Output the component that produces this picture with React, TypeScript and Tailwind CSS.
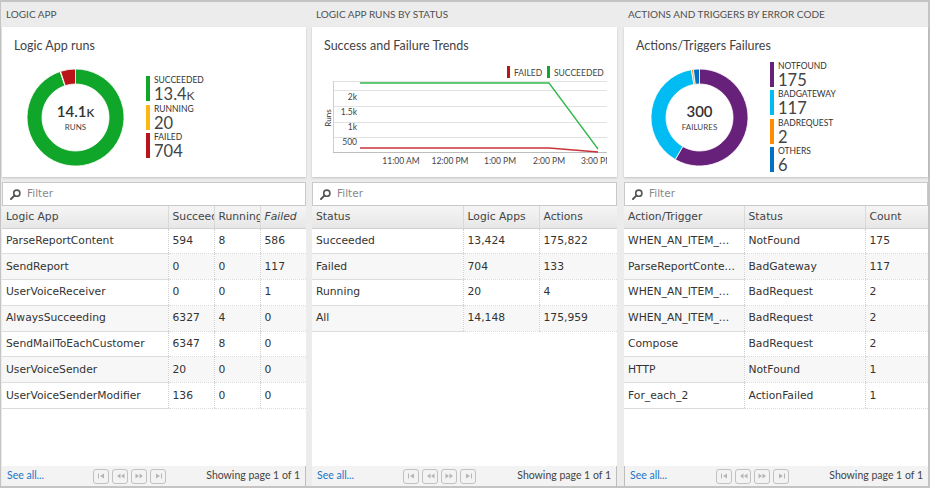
import React from "react";

const seg = "font-['Segoe_UI',Lato,sans-serif]";
const grid = "font-['DejaVu_Sans',Verdana,sans-serif]";

type Slice = { color: string; from: number; to: number };

const pt = (c: number, r: number, a: number) => {
  const rad = (a * Math.PI) / 180;
  return `${(c + r * Math.sin(rad)).toFixed(2)} ${(c - r * Math.cos(rad)).toFixed(2)}`;
};

const arc = (from: number, to: number) => {
  const c = 48.5;
  const R = 48.5;
  const r = 33.5;
  const large = to - from > 180 ? 1 : 0;
  return `M ${pt(c, R, from)} A ${R} ${R} 0 ${large} 1 ${pt(c, R, to)} L ${pt(c, r, to)} A ${r} ${r} 0 ${large} 0 ${pt(c, r, from)} Z`;
};

const Donut = ({ slices, value, small, label }: { slices: Slice[]; value: string; small?: string; label: string }) => (
  <svg width="97" height="97" viewBox="0 0 97 97" className="shrink-0">
    {slices.map((s, i) => (
      <path key={i} d={arc(s.from, s.to)} fill={s.color} stroke="#fff" strokeWidth="0.8" />
    ))}
    <text x="48.5" y="48" textAnchor="middle" fontSize="15" fontWeight="600" fill="#333" fontFamily="Lato, sans-serif">
      {value}
      {small && <tspan fontSize="11.5">{small}</tspan>}
    </text>
    <text x="48.5" y="61" textAnchor="middle" fontSize="8" fill="#444" fontFamily="Lato, sans-serif">
      {label}
    </text>
  </svg>
);

type LegendItem = { color: string; label: string; value: string; k?: boolean };

const Legend = ({ items }: { items: LegendItem[] }) => (
  <div className="flex flex-col gap-[3.5px]">
    {items.map((it) => (
      <div key={it.label} className="flex h-[25px]">
        <div className="w-[4px]" style={{ backgroundColor: it.color }} />
        <div className={`ml-[4px] flex flex-col text-[#333] ${seg}`}>
          <span className="text-[8.5px] leading-[8px]">{it.label}</span>
          <span className="mt-[2px] text-[16.5px] leading-[16px] text-[#444]">
            {it.value}
            {it.k && <span className="text-[12px]">K</span>}
          </span>
        </div>
      </div>
    ))}
  </div>
);

const Card = ({ title, children }: { title: string; children: React.ReactNode }) => (
  <div className="h-[150px] bg-white shadow-[0_1px_2px_rgba(0,0,0,0.18)] overflow-hidden">
    <div className={`pt-[11px] pl-[12px] text-[12.5px] leading-[16px] text-[#444] ${seg}`}>{title}</div>
    {children}
  </div>
);

const TrendChart = () => {
  const gl = [31, 47, 63, 78];
  const xl = [
    [89, "11:00 AM"],
    [138, "12:00 PM"],
    [188, "1:00 PM"],
    [237, "2:00 PM"],
    [285, "3:00 PM"],
  ] as const;
  return (
    <svg width="295" height="110" viewBox="0 0 295 110" className="mt-[5px]" fontFamily="Lato, sans-serif">
      <rect x="195" y="7" width="3" height="12" fill="#ba141a" />
      <text x="202" y="16.5" fontSize="8.5" fill="#444">FAILED</text>
      <rect x="235" y="7" width="3" height="12" fill="#10a62a" />
      <text x="242" y="16.5" fontSize="8.5" fill="#444">SUCCEEDED</text>
      <line x1="21" y1="22.5" x2="295" y2="22.5" stroke="#e2e2e2" />
      {gl.map((y) => (
        <line key={y} x1="21" y1={y + 0.5} x2="295" y2={y + 0.5} stroke="#e2e2e2" />
      ))}
      <line x1="21.5" y1="22" x2="21.5" y2="93" stroke="#cfcfcf" />
      <line x1="21" y1="93.5" x2="295" y2="93.5" stroke="#bdbdbd" />
      <text x="45" y="41" fontSize="8.5" fill="#444" textAnchor="end">2k</text>
      <text x="45" y="56" fontSize="8.5" fill="#444" textAnchor="end">1.5k</text>
      <text x="45" y="71" fontSize="8.5" fill="#444" textAnchor="end">1k</text>
      <text x="45" y="86" fontSize="8.5" fill="#444" textAnchor="end">500</text>
      <text x="0" y="0" fontSize="8" fill="#333" textAnchor="middle" transform="translate(19 59) rotate(-90)">
        Runs
      </text>
      <polyline points="48,24 237,24 286,90" fill="none" stroke="#2fb84a" strokeWidth="1.3" />
      <polyline points="48,89 237,89 286,93" fill="none" stroke="#c8333a" strokeWidth="1.3" />
      {xl.map(([x, t]) => (
        <text key={t} x={x} y="105" fontSize="8.5" fill="#444" textAnchor="middle">
          {t}
        </text>
      ))}
    </svg>
  );
};

const Filter = () => (
  <div className="mt-[5px] h-[24px] shrink-0 bg-white border border-[#c9c9c9] flex items-center pl-[7px]">
    <svg width="11" height="11" viewBox="0 0 11 11">
      <circle cx="6.8" cy="4.2" r="3.1" fill="none" stroke="#555" strokeWidth="1.6" />
      <line x1="4.6" y1="6.4" x2="1" y2="10" stroke="#555" strokeWidth="2" strokeLinecap="round" />
    </svg>
    <span className={`ml-[6px] text-[10.5px] text-[#888] ${grid}`}>Filter</span>
  </div>
);

type Col = { name: string; w: number; italic?: boolean };

const Table = ({ cols, rows }: { cols: Col[]; rows: string[][] }) => (
  <table className={`w-full table-fixed border-collapse text-[10.75px] text-[#333] ${grid}`}>
    <colgroup>
      {cols.map((c) => (
        <col key={c.name} style={{ width: c.w }} />
      ))}
    </colgroup>
    <thead>
      <tr className="h-[22px] bg-gradient-to-b from-[#f5f5f5] to-[#e7e7e7]">
        {cols.map((c, i) => (
          <th
            key={c.name}
            className={`px-[4px] text-left font-normal text-[#444] whitespace-nowrap overflow-hidden text-clip border-b border-[#d0d0d0] ${
              i > 0 ? "border-l border-l-[#d9d9d9]" : ""
            } ${c.italic ? "italic" : ""}`}
          >
            {c.name}
          </th>
        ))}
      </tr>
    </thead>
    <tbody>
      {rows.map((r, ri) => (
        <tr key={ri} className={`h-[25.8px] ${ri % 2 === 1 ? "bg-[#f7f7f7]" : "bg-white"}`}>
          {r.map((cell, ci) => (
            <td
              key={ci}
              className={`px-[4px] whitespace-nowrap overflow-hidden border-b border-[#dcdcdc] ${
                ci > 0 ? "border-l border-l-[#cfcfcf] border-dotted" : ""
              }`}
            >
              {cell}
            </td>
          ))}
        </tr>
      ))}
    </tbody>
  </table>
);

const PagerIcon = ({ kind }: { kind: number }) => (
  <svg width="9" height="6" viewBox="0 0 9 6">
    {kind === 0 && (
      <>
        <rect x="1" y="0.5" width="1" height="5" fill="#b5b5b5" />
        <path d="M7 0.5 L3 3 L7 5.5 Z" fill="#b5b5b5" />
      </>
    )}
    {kind === 1 && <path d="M4.5 0.5 L1 3 L4.5 5.5 Z M8.5 0.5 L5 3 L8.5 5.5 Z" fill="#b5b5b5" />}
    {kind === 2 && <path d="M0.5 0.5 L4 3 L0.5 5.5 Z M4.5 0.5 L8 3 L4.5 5.5 Z" fill="#b5b5b5" />}
    {kind === 3 && (
      <>
        <path d="M2 0.5 L6 3 L2 5.5 Z" fill="#b5b5b5" />
        <rect x="7" y="0.5" width="1" height="5" fill="#b5b5b5" />
      </>
    )}
  </svg>
);

const Footer = ({ side }: { side: "l" | "r" }) => (
  <div
    className={`h-[20px] shrink-0 bg-[#f3f3f3] flex items-center text-[10.5px] ${seg} ${
      side === "r" ? "border-r border-[#bdbdbd]" : "border-l border-[#bdbdbd]"
    }`}
  >
    <span className="w-[91px] pl-[5px] text-[#1a73c8]">See all...</span>
    <div className="flex gap-[3px]">
      {[0, 1, 2, 3].map((k) => (
        <div key={k} className="w-[16px] h-[15px] rounded-[3px] border border-[#c2c2c2] flex items-center justify-center">
          <PagerIcon kind={k} />
        </div>
      ))}
    </div>
    <span className="ml-auto pr-[5px] text-[#444]">Showing page 1 of 1</span>
  </div>
);

const Panel = ({
  w,
  header,
  card,
  table,
  side,
}: {
  w: string;
  header: string;
  card: React.ReactNode;
  table: React.ReactNode;
  side: "l" | "r";
}) => (
  <div className={`${w} flex flex-col h-full`}>
    <div className={`h-[25px] shrink-0 flex items-center pl-[4px] text-[10px] text-[#505050] ${seg}`}>{header}</div>
    {card}
    <Filter />
    <div className="flex-1 bg-white">{table}</div>
    <Footer side={side} />
  </div>
);

export default function App() {
  return (
    <div className="w-[930px] h-[488px] bg-[#ececec] border-t-2 border-r-2 border-b-2 border-l border-[#c4c4c4] flex pl-[1px]">
      <Panel
        w="w-[304px]"
        header="LOGIC APP"
        side="r"
        card={
          <Card title="Logic App runs">
            <div className="flex items-center h-[114px] mt-[6px] pl-[25px] gap-[22px]">
              <Donut
                value="14.1"
                small="K"
                label="RUNS"
                slices={[
                  { color: "#10a62a", from: 0, to: 341.6 },
                  { color: "#fcb714", from: 341.6, to: 342.1 },
                  { color: "#ba141a", from: 342.1, to: 360 },
                ]}
              />
              <Legend
                items={[
                  { color: "#10a62a", label: "SUCCEEDED", value: "13.4", k: true },
                  { color: "#fcb714", label: "RUNNING", value: "20" },
                  { color: "#ba141a", label: "FAILED", value: "704" },
                ]}
              />
            </div>
          </Card>
        }
        table={
          <Table
            cols={[
              { name: "Logic App", w: 166 },
              { name: "Succeeded", w: 46 },
              { name: "Running", w: 46 },
              { name: "Failed", w: 46, italic: true },
            ]}
            rows={[
              ["ParseReportContent", "594", "8", "586"],
              ["SendReport", "0", "0", "117"],
              ["UserVoiceReceiver", "0", "0", "1"],
              ["AlwaysSucceeding", "6327", "4", "0"],
              ["SendMailToEachCustomer", "6347", "8", "0"],
              ["UserVoiceSender", "20", "0", "0"],
              ["UserVoiceSenderModifier", "136", "0", "0"],
            ]}
          />
        }
      />
      <Panel
        w="w-[305px] ml-[6px]"
        header="LOGIC APP RUNS BY STATUS"
        side="r"
        card={
          <Card title="Success and Failure Trends">
            <TrendChart />
          </Card>
        }
        table={
          <Table
            cols={[
              { name: "Status", w: 151 },
              { name: "Logic Apps", w: 76 },
              { name: "Actions", w: 78 },
            ]}
            rows={[
              ["Succeeded", "13,424", "175,822"],
              ["Failed", "704", "133"],
              ["Running", "20", "4"],
              ["All", "14,148", "175,959"],
            ]}
          />
        }
      />
      <Panel
        w="w-[304px] ml-[7px]"
        header="ACTIONS AND TRIGGERS BY ERROR CODE"
        side="l"
        card={
          <Card title="Actions/Triggers Failures">
            <div className="flex items-center h-[114px] mt-[6px] pl-[27px] gap-[22px]">
              <Donut
                value="300"
                label="FAILURES"
                slices={[
                  { color: "#68217a", from: 0, to: 210 },
                  { color: "#00bcf2", from: 210, to: 350.4 },
                  { color: "#ff8c00", from: 350.4, to: 352.8 },
                  { color: "#0072c6", from: 352.8, to: 360 },
                ]}
              />
              <Legend
                items={[
                  { color: "#68217a", label: "NOTFOUND", value: "175" },
                  { color: "#00bcf2", label: "BADGATEWAY", value: "117" },
                  { color: "#ff8c00", label: "BADREQUEST", value: "2" },
                  { color: "#0072c6", label: "OTHERS", value: "6" },
                ]}
              />
            </div>
          </Card>
        }
        table={
          <Table
            cols={[
              { name: "Action/Trigger", w: 120 },
              { name: "Status", w: 121 },
              { name: "Count", w: 63 },
            ]}
            rows={[
              ["WHEN_AN_ITEM_...", "NotFound", "175"],
              ["ParseReportConte...", "BadGateway", "117"],
              ["WHEN_AN_ITEM_...", "BadRequest", "2"],
              ["WHEN_AN_ITEM_...", "BadRequest", "2"],
              ["Compose", "BadRequest", "2"],
              ["HTTP", "NotFound", "1"],
              ["For_each_2", "ActionFailed", "1"],
            ]}
          />
        }
      />
    </div>
  );
}
